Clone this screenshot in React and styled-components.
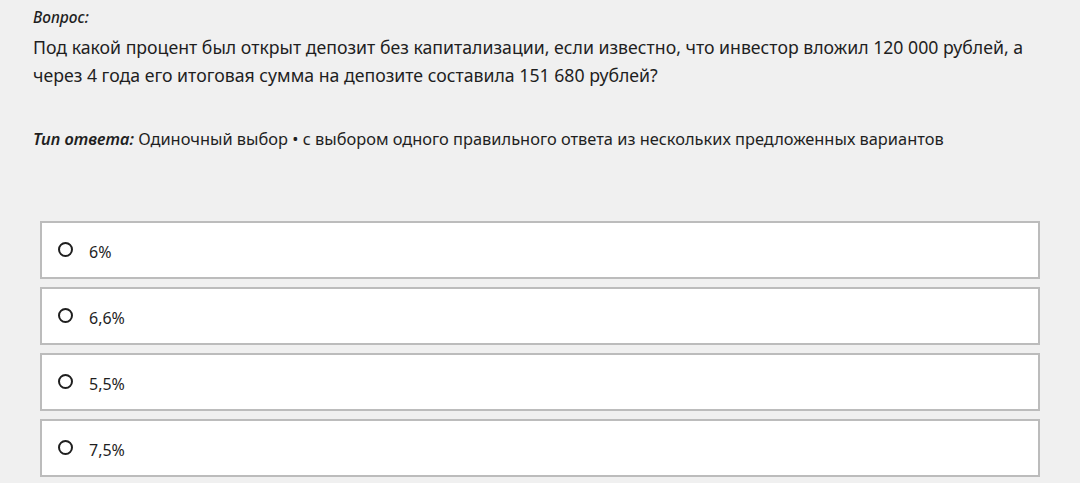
import styled, { createGlobalStyle } from "styled-components";

const Global = createGlobalStyle`
  html, body {
    margin: 0;
    padding: 0;
    background: #f0f0f0;
  }
  body {
    font-family: "Noto Sans", "Open Sans", sans-serif;
    color: #1f1f1f;
  }
`;

const Page = styled.div`
  padding: 7px 40px 0 33px;
  width: 1080px;
  box-sizing: border-box;
`;

const Label = styled.div`
  font-style: italic;
  font-weight: 500;
  font-size: 15.5px;
  line-height: 21px;
`;

const Question = styled.p`
  margin: 5px 0 0;
  font-size: 17.7px;
  line-height: 28px;
  max-width: 1010px;
`;

const AnswerType = styled.div`
  margin-top: 39px;
  font-size: 16.4px;
  line-height: 22px;
  b {
    font-style: italic;
    font-weight: 600;
  }
`;

const Options = styled.div`
  margin: 71px 0 0 7px;
  display: flex;
  flex-direction: column;
  gap: 8px;
`;

const Option = styled.label`
  display: flex;
  align-items: center;
  gap: 16px;
  height: 58px;
  box-sizing: border-box;
  padding: 3px 0 0 16px;
  background: #fff;
  border: 2px solid #bcbcbc;
  font-size: 16px;
  cursor: pointer;
`;

const Radio = styled.span`
  width: 15px;
  height: 15px;
  box-sizing: border-box;
  border: 2.5px solid #1f1f1f;
  border-radius: 50%;
  flex-shrink: 0;
  margin-top: -5px;
`;

const answers = ["6%", "6,6%", "5,5%", "7,5%"];

export default function App() {
  return (
    <Page>
      <Global />
      <Label>Вопрос:</Label>
      <Question>
        Под какой процент был открыт депозит без капитализации, если известно, что инвестор вложил 120 000 рублей, а
        через 4 года его итоговая сумма на депозите составила 151 680 рублей?
      </Question>
      <AnswerType>
        <b>Тип ответа:</b> Одиночный выбор • с выбором одного правильного ответа из нескольких предложенных вариантов
      </AnswerType>
      <Options>
        {answers.map((a) => (
          <Option key={a}>
            <Radio />
            {a}
          </Option>
        ))}
      </Options>
    </Page>
  );
}
